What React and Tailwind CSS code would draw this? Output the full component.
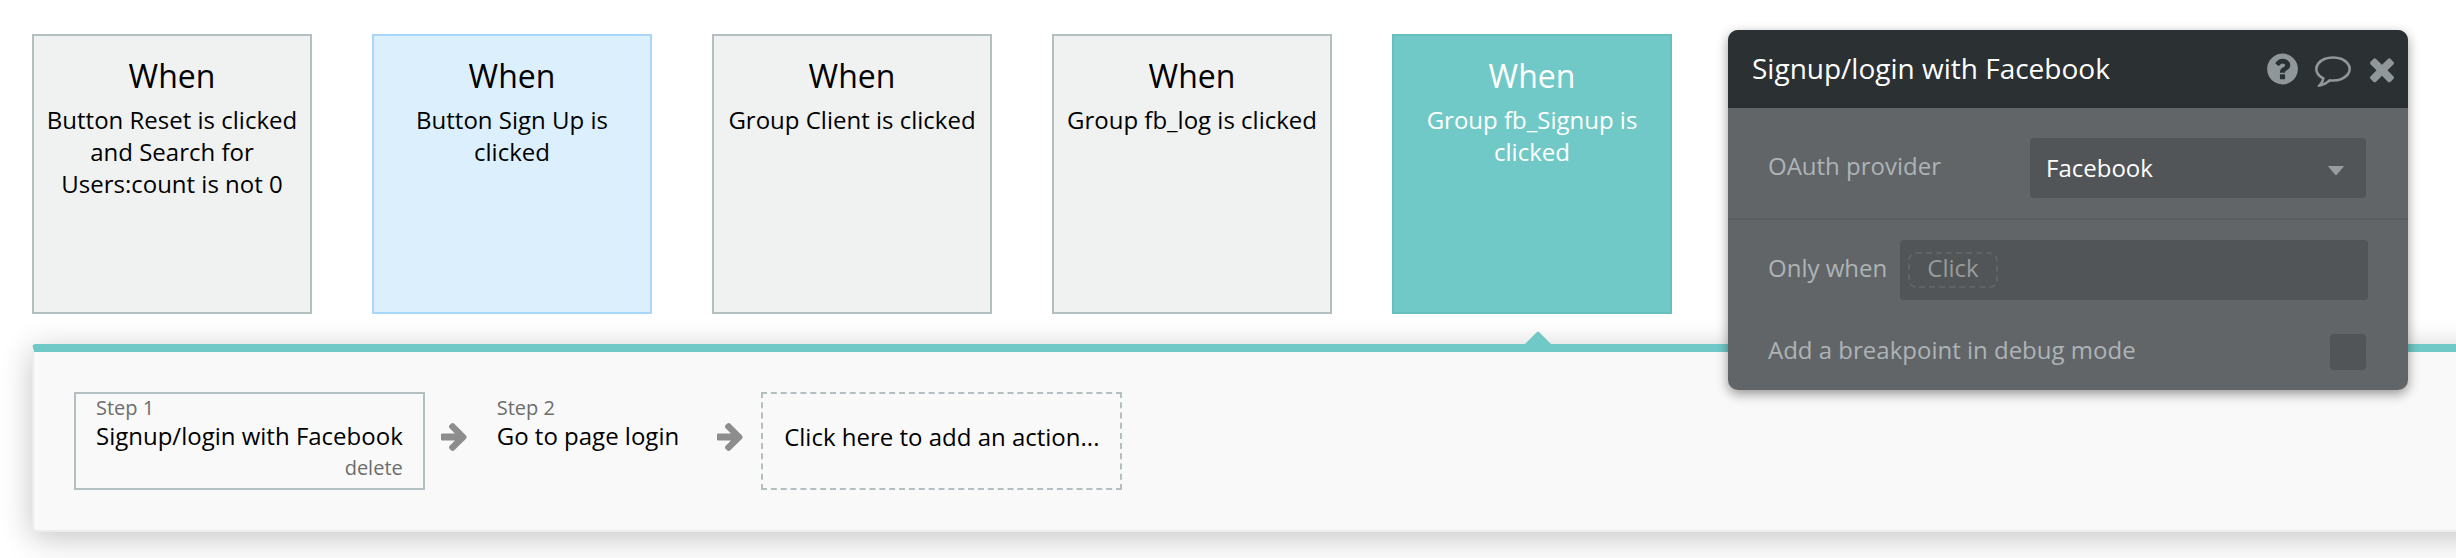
const ICONS = {
  help: {
    box: "0 -1536 1536 1792",
    d: "M896 160v192q0 14 -9 23t-23 9h-192q-14 0 -23 -9t-9 -23v-192q0 -14 9 -23t23 -9h192q14 0 23 9t9 23zM1152 832q0 88 -55.5 163t-138.5 116t-170 41q-243 0 -371 -213q-15 -24 8 -42l132 -100q7 -6 19 -6q16 0 25 12q53 68 86 92q34 24 86 24q48 0 85.5 -26t37.5 -59q0 -38 -20 -61t-68 -45q-63 -28 -115.5 -86.5t-52.5 -125.5v-36q0 -14 9 -23t23 -9h192q14 0 23 9t9 23q0 19 21.5 49.5t54.5 49.5q32 18 49 28.5t46 35t44.5 48t28 60.5t12.5 81zM1536 640q0 -209 -103 -385.5t-279.5 -279.5t-385.5 -103t-385.5 103t-279.5 279.5t-103 385.5t103 385.5t279.5 279.5t385.5 103t385.5 -103t279.5 -279.5t103 -385.5z",
  },
  comment: {
    box: "0 -1536 1792 1792",
    d: "M896 1152q-204 0 -381.5 -69.5t-282 -187.5t-104.5 -255q0 -112 71.5 -213.5t201.5 -175.5l87 -50l-27 -96q-24 -91 -70 -172q152 63 275 171l43 38l57 -6q69 -8 130 -8q204 0 381.5 69.5t282 187.5t104.5 255t-104.5 255t-282 187.5t-381.5 69.5zM1792 640q0 -174 -120 -321.5t-326 -233t-450 -85.5q-70 0 -145 8q-198 -175 -460 -242q-49 -14 -114 -22h-5q-15 0 -27 10.5t-16 27.5v1q-3 4 -.5 12t2 10t4.5 9.5l6 9t7 8.5t8 9q7 8 31 34.5t34.5 38t31 39.5t32.5 51t27 59t26 76q-157 89 -247.5 220t-90.5 281q0 174 120 321.5t326 233t450 85.5t450 -85.5t326 -233t120 -321.5z",
  },
  close: {
    box: "110 -1536 1188 1792",
    d: "M1298 214q0 -40 -28 -68l-136 -136q-28 -28 -68 -28t-68 28l-294 294l-294 -294q-28 -28 -68 -28t-68 28l-136 136q-28 28 -28 68t28 68l294 294l-294 294q-28 28 -28 68t28 68l136 136q28 28 68 28t68 -28l294 -294l294 294q28 28 68 28t68 -28l136 -136q28 -28 28 -68t-28 -68l-294 -294l294 -294q28 -28 28 -68z",
  },
  arrow: {
    box: "64 -1355 1408 1558",
    d: "M1472 576q0 -54 -37 -91l-651 -651q-39 -37 -91 -37q-51 0 -90 37l-75 75q-38 38 -38 91t38 91l293 293h-704q-52 0 -84.5 37.5t-32.5 90.5v128q0 53 32.5 90.5t84.5 37.5h704l-293 294q-38 36 -38 90t38 90l75 75q38 38 90 38q53 0 91 -38l651 -651q37 -35 37 -90z",
  },
};

function Icon({ name, className }) {
  return (
    <svg viewBox={ICONS[name].box} className={className} fill="currentColor" aria-hidden="true">
      <path transform="scale(1 -1)" d={ICONS[name].d} />
    </svg>
  );
}

const EVENTS = [
  { text: "Button Reset is clicked and Search for Users:count is not 0", tone: "border-[#b3bfc1] bg-[#f0f2f1] text-black" },
  { text: "Button Sign Up is clicked", tone: "border-[#a5d8fa] bg-[#dceffd] text-black" },
  { text: "Group Client is clicked", tone: "border-[#b3bfc1] bg-[#f0f2f1] text-black" },
  { text: "Group fb_log is clicked", tone: "border-[#b3bfc1] bg-[#f0f2f1] text-black" },
  { text: "Group fb_Signup is clicked", tone: "border-[#64bfbd] bg-[#71c9c7] text-white", selected: true },
];

function EventCard({ event }) {
  return (
    <div className="relative shrink-0">
      <button
        type="button"
        className={"flex size-[280px] flex-col items-center gap-2 border-2 px-2 pt-5 text-center " + event.tone}
      >
        <span className="text-[32px] leading-10">When</span>
        <span className="text-2xl">{event.text}</span>
      </button>
      {event.selected && (
        <svg viewBox="0 0 28 14" className="absolute -bottom-[31px] left-[132px] h-3.5 w-7 text-[#71c9c7]" fill="currentColor" aria-hidden="true">
          <path d="M0 14L13 1Q14 0.2 15 1L28 14Z" />
        </svg>
      )}
    </div>
  );
}

function StepArrow() {
  return <Icon name="arrow" className="mb-2 ml-4 h-7 w-[26px] shrink-0 text-[#8d8d8d]" />;
}

function Steps() {
  return (
    <section className="-mr-12 ml-8 flex items-center rounded-sm border-2 border-t-8 border-[#ececec] border-t-[#71c9c7] bg-[#f9f9f9] p-10 shadow-[0_6px_32px_rgba(0,0,0,0.24)]">
      <div className="flex h-[98px] flex-col border-2 border-[#b3bfc1] px-5">
        <span className="text-xl leading-7 text-[#6d6d6d]">Step 1</span>
        <button type="button" className="text-left text-2xl leading-7">Signup/login with Facebook</button>
        <button type="button" className="self-end text-xl leading-9 text-[#6d6d6d]">delete</button>
      </div>
      <StepArrow />
      <div className="ml-2 flex h-[98px] flex-col border-2 border-transparent px-5">
        <span className="text-xl leading-7 text-[#6d6d6d]">Step 2</span>
        <button type="button" className="text-left text-2xl leading-7">Go to page login</button>
      </div>
      <StepArrow />
      <button type="button" className="ml-[18px] h-[98px] border-2 border-dashed border-[#b3bfc1] px-[21px] pb-2 text-2xl">
        Click here to add an action...
      </button>
    </section>
  );
}

function PropertyEditor() {
  return (
    <section className="absolute top-[30px] left-[1728px] z-20 w-[680px] overflow-hidden rounded-[10px] bg-[#616568] text-2xl text-[#aeb3b6] shadow-[0_4px_12px_rgba(0,0,0,0.4)]">
      <header className="flex h-[78px] items-center bg-[#2b3033] pr-3.5 pl-6 text-[#8f979b]">
        <h2 className="flex-1 text-[28px] text-white">Signup/login with Facebook</h2>
        <button type="button" aria-label="Help"><Icon name="help" className="h-9 w-[31px]" /></button>
        <button type="button" aria-label="Comment" className="ml-[17px]"><Icon name="comment" className="size-9" /></button>
        <button type="button" aria-label="Close" className="ml-[19px]"><Icon name="close" className="h-9 w-6" /></button>
      </header>
      <div className="flex items-center justify-between border-b-2 border-[#5a5e61] pt-[30px] pr-[42px] pb-5 pl-10">
        <label htmlFor="provider" className="pb-1">OAuth provider</label>
        <div className="relative w-[336px]">
          <select id="provider" className="h-[60px] w-full appearance-none rounded-sm bg-[#515558] px-4 text-white">
            <option>Facebook</option>
          </select>
          <svg viewBox="0 0 16 9" className="pointer-events-none absolute top-7 right-[22px] h-[9px] w-4 text-[#979ca0]" fill="currentColor" aria-hidden="true">
            <path d="M0.6 0H15.4Q16 0 15.6 0.7L9 8.4Q8 9.4 7 8.4L0.4 0.7Q0 0 0.6 0Z" />
          </svg>
        </div>
      </div>
      <div className="flex items-center px-10 pt-5">
        <label htmlFor="condition" className="w-[132px] pb-1">Only when</label>
        <div className="flex h-[60px] flex-1 items-center rounded-sm bg-[#515558] px-2">
          <button id="condition" type="button" className="h-9 w-[90px] rounded-lg border-2 border-dashed border-[#5f6366] pb-1 leading-7 text-[#999a9a]">
            Click
          </button>
        </div>
      </div>
      <div className="flex items-center justify-between pt-[34px] pr-[42px] pb-5 pl-10">
        <label htmlFor="breakpoint" className="pb-1">Add a breakpoint in debug mode</label>
        <input id="breakpoint" type="checkbox" className="size-9 appearance-none rounded-sm bg-[#515558]" />
      </div>
    </section>
  );
}

export default function App() {
  return (
    <main className="relative min-h-screen overflow-hidden bg-white pb-6 font-['Open_Sans',sans-serif] text-black">
      <div className="relative z-10 flex gap-[60px] px-8 pt-[34px] pb-[30px]">
        {EVENTS.map((event) => (
          <EventCard key={event.text} event={event} />
        ))}
      </div>
      <Steps />
      <PropertyEditor />
    </main>
  );
}
